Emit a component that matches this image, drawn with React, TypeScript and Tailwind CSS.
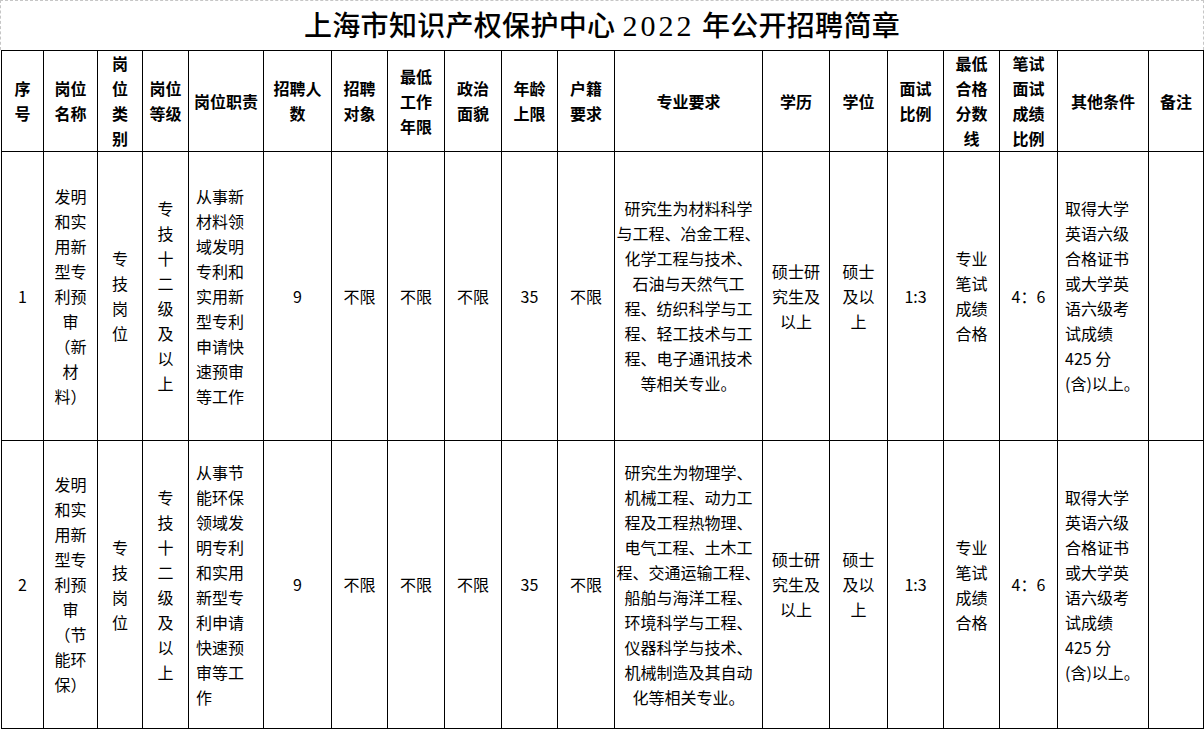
import React from "react"

type Cell = { lines: string[]; align?: "left" | "center" }

const widths = [
  "w-[42px]",
  "w-[54px]",
  "w-[45px]",
  "w-[46px]",
  "w-[75px]",
  "w-[68px]",
  "w-[56px]",
  "w-[57px]",
  "w-[57px]",
  "w-[56px]",
  "w-[57px]",
  "w-[148px]",
  "w-[67px]",
  "w-[58px]",
  "w-[56px]",
  "w-[56px]",
  "w-[58px]",
  "w-[91px]",
  "w-[55px]",
]

const headers: string[][] = [
  ["序", "号"],
  ["岗位", "名称"],
  ["岗", "位", "类", "别"],
  ["岗位", "等级"],
  ["岗位职责"],
  ["招聘人", "数"],
  ["招聘", "对象"],
  ["最低", "工作", "年限"],
  ["政治", "面貌"],
  ["年龄", "上限"],
  ["户籍", "要求"],
  ["专业要求"],
  ["学历"],
  ["学位"],
  ["面试", "比例"],
  ["最低", "合格", "分数", "线"],
  ["笔试", "面试", "成绩", "比例"],
  ["其他条件"],
  ["备注"],
]

const shared = {
  type: ["专", "技", "岗", "位"],
  level: ["专", "技", "十", "二", "级", "及", "以", "上"],
  edu: ["硕士研", "究生及", "以上"],
  degree: ["硕士", "及以", "上"],
  pass: ["专业", "笔试", "成绩", "合格"],
  other: ["取得大学", "英语六级", "合格证书", "或大学英", "语六级考", "试成绩", "425 分", "(含)以上。"],
}

const rows: { height: string; cells: Cell[] }[] = [
  {
    height: "h-[289px]",
    cells: [
      { lines: ["1"] },
      { lines: ["发明", "和实", "用新", "型专", "利预", "审", "（新", "材", "料）"] },
      { lines: shared.type },
      { lines: shared.level },
      {
        lines: ["从事新", "材料领", "域发明", "专利和", "实用新", "型专利", "申请快", "速预审", "等工作"],
        align: "left",
      },
      { lines: ["9"] },
      { lines: ["不限"] },
      { lines: ["不限"] },
      { lines: ["不限"] },
      { lines: ["35"] },
      { lines: ["不限"] },
      {
        lines: [
          "研究生为材料科学",
          "与工程、冶金工程、",
          "化学工程与技术、",
          "石油与天然气工",
          "程、纺织科学与工",
          "程、轻工技术与工",
          "程、电子通讯技术",
          "等相关专业。",
        ],
      },
      { lines: shared.edu },
      { lines: shared.degree },
      { lines: ["1:3"] },
      { lines: shared.pass },
      { lines: ["4：6"] },
      { lines: shared.other, align: "left" },
      { lines: [] },
    ],
  },
  {
    height: "h-[288px]",
    cells: [
      { lines: ["2"] },
      { lines: ["发明", "和实", "用新", "型专", "利预", "审", "（节", "能环", "保）"] },
      { lines: shared.type },
      { lines: shared.level },
      {
        lines: ["从事节", "能环保", "领域发", "明专利", "和实用", "新型专", "利申请", "快速预", "审等工", "作"],
        align: "left",
      },
      { lines: ["9"] },
      { lines: ["不限"] },
      { lines: ["不限"] },
      { lines: ["不限"] },
      { lines: ["35"] },
      { lines: ["不限"] },
      {
        lines: [
          "研究生为物理学、",
          "机械工程、动力工",
          "程及工程热物理、",
          "电气工程、土木工",
          "程、交通运输工程、",
          "船舶与海洋工程、",
          "环境科学与工程、",
          "仪器科学与技术、",
          "机械制造及其自动",
          "化等相关专业。",
        ],
      },
      { lines: shared.edu },
      { lines: shared.degree },
      { lines: ["1:3"] },
      { lines: shared.pass },
      { lines: ["4：6"] },
      { lines: shared.other, align: "left" },
      { lines: [] },
    ],
  },
]

export default function App() {
  return (
    <div className="w-[1204px] bg-white text-black font-['Noto_Sans_CJK_SC',sans-serif]">
      {/* title, with the sheet's dashed gridlines around it */}
      <div className="h-[50px] border-x border-t border-dashed border-[#c6c6c6] flex items-center justify-center">
        <h1 className="text-[28px] font-medium leading-none tracking-[0.3px] font-['Liberation_Serif','Noto_Sans_CJK_SC',serif]">
          上海市知识产权保护中心 <span className="text-[30px] tracking-[3px]">2022</span> 年公开招聘简章
        </h1>
      </div>

      <table className="ml-px w-[1203px] table-fixed border-collapse text-[16px]">
        <colgroup>
          {widths.map((w, i) => (
            <col key={i} className={w} />
          ))}
        </colgroup>
        <thead>
          <tr className="h-[101px]">
            {headers.map((h, i) => (
              <th key={i} className="border border-black p-0 align-middle font-bold text-center">
                {h.map((l, j) => (
                  <div key={j} className="leading-[25px] whitespace-nowrap">
                    {l}
                  </div>
                ))}
              </th>
            ))}
          </tr>
        </thead>
        <tbody>
          {rows.map((row, r) => (
            <tr key={r} className={row.height}>
              {row.cells.map((c, i) => (
                <td
                  key={i}
                  className={
                    c.align === "left"
                      ? "border border-black p-0 pl-[7px] align-middle text-left"
                      : "border border-black p-0 align-middle text-center"
                  }
                >
                  {c.lines.map((l, j) => (
                    <div key={j} className="leading-[25px] whitespace-nowrap">
                      {l}
                    </div>
                  ))}
                </td>
              ))}
            </tr>
          ))}
        </tbody>
      </table>
    </div>
  )
}
